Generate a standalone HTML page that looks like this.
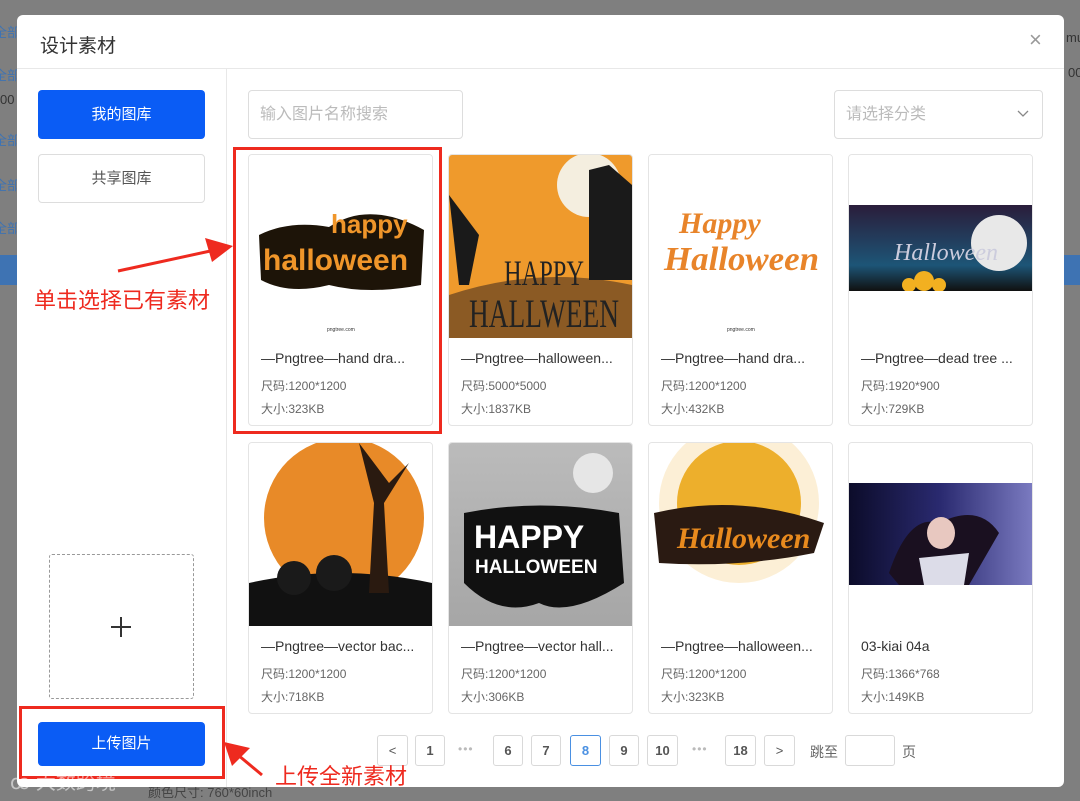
<!DOCTYPE html>
<html><head><meta charset="utf-8"><style>
*{margin:0;padding:0;box-sizing:border-box}
body{width:1080px;height:800px;background:#7f7f7f;position:relative;overflow:hidden;font-family:"Liberation Sans","Noto Sans CJK SC",sans-serif}
.a{position:absolute}
.modal{left:17px;top:15px;width:1047px;height:772px;background:#fff;border-radius:6px}
.card{position:absolute;width:185px;height:272px;border:1px solid #e4e4e4;border-radius:4px;background:#fff;overflow:hidden}
.img{position:absolute;left:0;top:0;width:183px;height:183px;overflow:hidden}
.t{position:absolute;left:12px;top:195px;font-size:14px;color:#333;white-space:nowrap}
.s{position:absolute;left:12px;font-size:12px;color:#666}
.pg{position:absolute;top:735px;height:31px;border:1px solid #d9d9d9;border-radius:3px;font-size:13px;font-weight:bold;color:#555;text-align:center;line-height:29px;background:#fff}
.dots{position:absolute;top:735px;font-size:12px;color:#bbb;letter-spacing:1px;line-height:29px}
.red{color:#ee2a1f}
.bg{position:absolute;font-size:13px;color:#3e73b3}
</style></head><body>
<div class="a" style="left:0;top:255px;width:17px;height:30px;background:#3e73b3"></div>
<div class="a" style="left:1064px;top:255px;width:16px;height:30px;background:#3e73b3"></div>
<div class="a" style="left:1066px;top:30px;font-size:13px;color:#333">mu</div>
<div class="a" style="left:1068px;top:65px;font-size:13px;color:#333">00</div>
<div class="a" style="left:0;top:92px;font-size:13px;color:#333">00</div>
<div class="bg" style="left:-6px;top:22px">全部</div>
<div class="bg" style="left:-6px;top:65px">全部</div>
<div class="bg" style="left:-6px;top:130px">全部</div>
<div class="bg" style="left:-6px;top:175px">全部</div>
<div class="bg" style="left:-6px;top:218px">全部</div>
<div class="a" style="left:148px;top:782px;font-size:13px;color:#444">颜色尺寸: 760*60inch</div>

<div class="a modal">
  <div class="a" style="left:23px;top:16px;font-size:19px;color:#333">设计素材</div>
  <div class="a" style="left:1012px;top:12px;font-size:22px;color:#999">×</div>
  <div class="a" style="left:0;top:53px;width:1047px;height:1px;background:#e8e8e8"></div>
  <div class="a" style="left:209px;top:54px;width:1px;height:718px;background:#e8e8e8"></div>
  <div class="a" style="left:21px;top:75px;width:167px;height:49px;background:#0a5cf5;border-radius:4px;color:#fff;font-size:15px;text-align:center;line-height:49px">我的图库</div>
  <div class="a" style="left:21px;top:139px;width:167px;height:49px;border:1px solid #ddd;border-radius:4px;color:#555;font-size:15px;text-align:center;line-height:47px">共享图库</div>
  <div class="a" style="left:32px;top:539px;width:145px;height:145px;border:1px dashed #999;border-radius:3px"></div>
  <div class="a" style="left:94px;top:611px;width:20px;height:1.5px;background:#333"></div>
  <div class="a" style="left:103px;top:602px;width:1.5px;height:20px;background:#333"></div>
  <div class="a" style="left:21px;top:707px;width:167px;height:44px;background:#0a5cf5;border-radius:4px;color:#fff;font-size:15px;text-align:center;line-height:44px">上传图片</div>
  <div class="a" style="left:231px;top:75px;width:215px;height:49px;border:1px solid #ddd;border-radius:4px;color:#bbb;font-size:16px;line-height:47px;padding-left:11px">输入图片名称搜索</div>
  <div class="a" style="left:817px;top:75px;width:209px;height:49px;border:1px solid #ddd;border-radius:4px;color:#bbb;font-size:16px;line-height:47px;padding-left:11px">请选择分类<svg style="position:absolute;right:13px;top:19px" width="12" height="8"><path d="M1 1 L6 6 L11 1" stroke="#888" stroke-width="1.3" fill="none"/></svg></div>
</div>

<!-- cards row 1 -->
<div class="card" style="left:248px;top:154px"><div class="img" style="background:#fff"><svg width="183" height="183"><path d="M10 80 Q40 65 80 72 Q120 45 175 75 L172 130 Q120 140 80 130 Q40 140 12 125Z" fill="#1d1408"/><text x="14" y="115" font-size="30" font-weight="bold" fill="#f0962a" font-family="Liberation Sans">halloween</text><text x="82" y="78" font-size="26" font-weight="bold" fill="#f0962a" font-family="Liberation Sans">happy</text><text x="78" y="176" font-size="5" fill="#333">pngtree.com</text></svg></div><div class="t">—Pngtree—hand dra...</div><div class="s" style="top:222px">尺码:1200*1200</div><div class="s" style="top:245px">大小:323KB</div></div>
<div class="card" style="left:448px;top:154px"><div class="img" style="background:#ef9a2c"><svg width="183" height="183"><circle cx="140" cy="30" r="32" fill="#f4eedf"/><path d="M0 140 Q90 110 183 130 L183 183 L0 183Z" fill="#8b5a24"/><path d="M140 15 L160 10 L183 30 L183 125 L140 125Z" fill="#1a1a1a"/><path d="M0 40 L30 80 L20 130 L10 130Z" fill="#1a1a1a"/><text x="55" y="130" font-size="36" fill="#222" font-family="Liberation Serif" textLength="80" lengthAdjust="spacingAndGlyphs">HAPPY</text><text x="20" y="172" font-size="40" fill="#222" font-family="Liberation Serif" textLength="150" lengthAdjust="spacingAndGlyphs">HALLWEEN</text></svg></div><div class="t">—Pngtree—halloween...</div><div class="s" style="top:222px">尺码:5000*5000</div><div class="s" style="top:245px">大小:1837KB</div></div>
<div class="card" style="left:648px;top:154px"><div class="img" style="background:#fff"><svg width="183" height="183"><text x="30" y="78" font-size="30" font-style="italic" font-weight="bold" fill="#e8842a" font-family="Liberation Serif">Happy</text><text x="15" y="115" font-size="34" font-style="italic" font-weight="bold" fill="#e8842a" font-family="Liberation Serif" textLength="155" lengthAdjust="spacingAndGlyphs">Halloween</text><text x="78" y="176" font-size="5" fill="#333">pngtree.com</text></svg></div><div class="t">—Pngtree—hand dra...</div><div class="s" style="top:222px">尺码:1200*1200</div><div class="s" style="top:245px">大小:432KB</div></div>
<div class="card" style="left:848px;top:154px"><div class="img" style="background:#fff"><div class="a" style="left:0;top:50px;width:183px;height:86px;background:linear-gradient(#2a1d3a,#1d5577 70%,#101010)"></div><svg class="a" style="left:0;top:50px" width="183" height="86"><circle cx="150" cy="38" r="28" fill="#e8e8e8"/><text x="45" y="55" font-size="24" font-style="italic" fill="#ccd" font-family="Liberation Serif">Halloween</text><circle cx="75" cy="76" r="10" fill="#f2b020"/><circle cx="60" cy="80" r="7" fill="#f2b020"/><circle cx="90" cy="80" r="7" fill="#f2b020"/></svg></div><div class="t">—Pngtree—dead tree ...</div><div class="s" style="top:222px">尺码:1920*900</div><div class="s" style="top:245px">大小:729KB</div></div>
<!-- row 2 -->
<div class="card" style="left:248px;top:442px"><div class="img" style="background:#fff"><svg width="183" height="183"><circle cx="95" cy="75" r="80" fill="#e88a28"/><path d="M0 140 Q90 120 183 140 L183 183 L0 183Z" fill="#111"/><path d="M110 0 L125 60 L120 150 L140 150 L135 60 L160 20 L140 40Z" fill="#2a1a10"/><circle cx="45" cy="135" r="17" fill="#1a1a1a"/><circle cx="85" cy="130" r="18" fill="#1a1a1a"/></svg></div><div class="t">—Pngtree—vector bac...</div><div class="s" style="top:222px">尺码:1200*1200</div><div class="s" style="top:245px">大小:718KB</div></div>
<div class="card" style="left:448px;top:442px"><div class="img" style="background:linear-gradient(#bbb,#a6a6a6)"><svg width="183" height="183"><circle cx="144" cy="30" r="20" fill="#e6e6e6"/><path d="M15 70 Q90 55 170 70 L175 140 Q120 175 90 160 Q50 175 15 140Z" fill="#111"/><text x="25" y="105" font-size="32" font-weight="bold" fill="#fff" font-family="Liberation Sans">HAPPY</text><text x="26" y="130" font-size="19" font-weight="bold" fill="#fff" font-family="Liberation Sans">HALLOWEEN</text></svg></div><div class="t">—Pngtree—vector hall...</div><div class="s" style="top:222px">尺码:1200*1200</div><div class="s" style="top:245px">大小:306KB</div></div>
<div class="card" style="left:648px;top:442px"><div class="img" style="background:#fff"><svg width="183" height="183"><circle cx="90" cy="60" r="80" fill="#fcefd6"/><circle cx="90" cy="60" r="62" fill="#edaf2c"/><path d="M5 70 Q90 50 175 80 L165 110 Q90 125 10 120Z" fill="#2a1a12"/><text x="28" y="105" font-size="30" font-style="italic" font-weight="bold" fill="#e88a1e" font-family="Liberation Serif">Halloween</text></svg></div><div class="t">—Pngtree—halloween...</div><div class="s" style="top:222px">尺码:1200*1200</div><div class="s" style="top:245px">大小:323KB</div></div>
<div class="card" style="left:848px;top:442px"><div class="img" style="background:#fff"><div class="a" style="left:0;top:40px;width:183px;height:102px;background:linear-gradient(90deg,#0c0c2a,#2a2a70 50%,#7a7ac0)"></div><svg class="a" style="left:0;top:40px" width="183" height="102"><path d="M40 90 Q60 30 90 40 Q130 20 150 50 L120 102 L50 102Z" fill="#1a1020"/><ellipse cx="92" cy="50" rx="14" ry="16" fill="#e8c8c0"/><path d="M70 75 L120 70 L115 102 L75 102Z" fill="#dcdce8"/></svg></div><div class="t">03-kiai 04a</div><div class="s" style="top:222px">尺码:1366*768</div><div class="s" style="top:245px">大小:149KB</div></div>

<!-- pagination -->
<div class="pg" style="left:377px;width:31px;font-weight:normal">&lt;</div>
<div class="pg" style="left:415px;width:30px">1</div>
<div class="dots" style="left:458px">•••</div>
<div class="pg" style="left:493px;width:30px">6</div>
<div class="pg" style="left:531px;width:30px">7</div>
<div class="pg" style="left:570px;width:31px;border-color:#4a90e2;color:#4a90e2">8</div>
<div class="pg" style="left:609px;width:30px">9</div>
<div class="pg" style="left:647px;width:31px">10</div>
<div class="dots" style="left:692px">•••</div>
<div class="pg" style="left:725px;width:31px">18</div>
<div class="pg" style="left:764px;width:31px;font-weight:normal">&gt;</div>
<div class="a" style="left:810px;top:742px;font-size:14px;color:#666">跳至</div>
<div class="a" style="left:845px;top:735px;width:50px;height:31px;border:1px solid #d9d9d9;border-radius:3px"></div>
<div class="a" style="left:902px;top:742px;font-size:14px;color:#666">页</div>

<!-- annotations -->
<div class="a" style="left:233px;top:147px;width:209px;height:287px;border:3px solid #ee2a1f"></div>
<div class="a" style="left:19px;top:706px;width:206px;height:73px;border:3px solid #ee2a1f"></div>
<svg class="a" style="left:0;top:0" width="1080" height="800"><line x1="118" y1="271" x2="215" y2="250" stroke="#ee2a1f" stroke-width="3"/><polygon points="233,246 205,238 212,262" fill="#ee2a1f"/><line x1="262" y1="775" x2="238" y2="755" stroke="#ee2a1f" stroke-width="3"/><polygon points="224,742 232,766 250,748" fill="#ee2a1f"/></svg>
<div class="a red" style="left:34px;top:283px;font-size:22px">单击选择已有素材</div>
<div class="a red" style="left:275px;top:759px;font-size:22px">上传全新素材</div>
<div class="a" style="left:10px;top:766px;font-size:20px;color:rgba(255,255,255,0.55)">ꝏ 大数跨境</div>
</body></html>
